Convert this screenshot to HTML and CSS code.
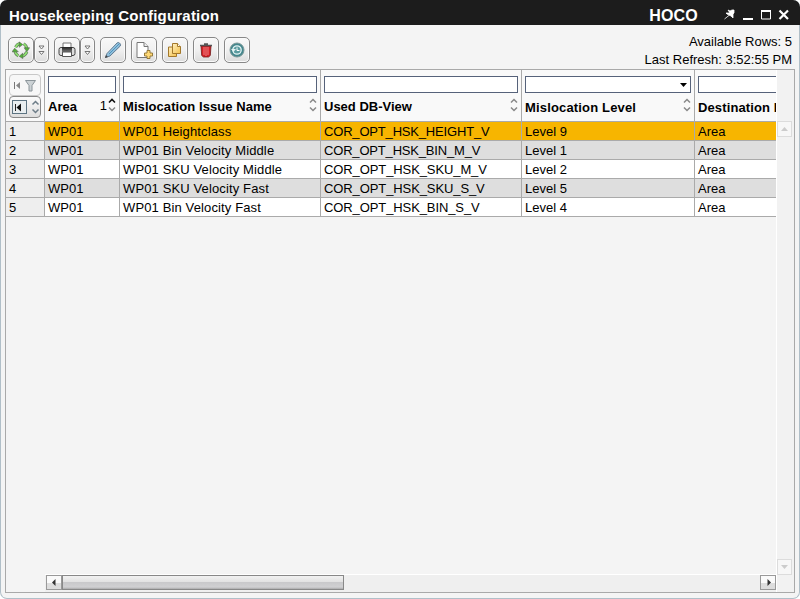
FILE: index.html
```html
<!DOCTYPE html>
<html lang="en">
<head>
<meta charset="utf-8">
<title>Housekeeping Configuration</title>
<link rel="stylesheet" href="styles.css">
</head>
<body>
<svg class="defs" width="0" height="0">
  <defs>
    <linearGradient id="blue" x1="0" y1="0" x2="1" y2="1"><stop offset="0" stop-color="#b5dcf0"/><stop offset="1" stop-color="#6ea4c8"/></linearGradient>
    <linearGradient id="gold" x1="0" y1="0" x2="1" y2="1"><stop offset="0" stop-color="#fff0c0"/><stop offset="1" stop-color="#f3c04c"/></linearGradient>
    <linearGradient id="ink" x1="0" y1="0" x2="0" y2="1"><stop offset="0" stop-color="#222"/><stop offset="1" stop-color="#777"/></linearGradient>
    <symbol id="sort" viewBox="0 0 8 14"><path d="M1 4.500L4 1.500L7 4.500M1 9.500L4 12.500L7 9.500" fill="none" stroke="currentColor" stroke-width="1.500"/></symbol>
    <symbol id="more" viewBox="0 0 7 11"><path d="M1 1h5L3.500 4zM1 6.500h5L3.500 9.500z" fill="#fff" stroke="#666" stroke-width=".9"/></symbol>
  </defs>
</svg>
<div class="window">
  <header class="titlebar">
    <h1 class="title">Housekeeping Configuration</h1>
    <span class="code">HOCO</span>
    <svg class="controls" width="68" height="14" viewBox="0 0 68 14">
      <path d="M5 2l2 1 2-1h2v3l-1 1v4l-2-2-2-1-2-1-1-1h4zM6.500 7L1.500 11" fill="#fff" stroke="#fff" stroke-width=".8"/>
      <path d="M20 11h10" stroke="#fff" stroke-width="2"/>
      <path d="M38.500 3v8h9V3z" fill="none" stroke="#fff"/><path d="M38 3h10" stroke="#fff" stroke-width="2"/>
      <path d="M56.500 2.500l8.500 8.500M65 2.500L56.500 11" stroke="#fff" stroke-width="2.200"/>
    </svg>
  </header>
  <div class="toolbar">
    <div class="buttons">
      <button class="btn first"><svg width="18" height="18" viewBox="0 0 20 20"><g fill="none" stroke="#5c7a58" stroke-width="3.400"><path d="M4 7Q6 3 9 3M13 3Q16 5 16.500 8M16.500 12Q15 16 11 17M7 16.500Q4 15 3 11"/></g><g fill="none" stroke="#8fe070" stroke-width="2"><path d="M4 7Q6 3 9 3M13 3Q16 5 16.500 8M16.500 12Q15 16 11 17M7 16.500Q4 15 3 11"/></g><path d="M8 1l4 3-4 3zM13.500 7.500h6L16.500 12zM12 13.500v6L8 17zM0 12l3-4 4 4z" fill="#4fb535" stroke="#555" stroke-width=".6"/></svg></button>
      <button class="btn drop"><svg width="7" height="11"><use href="#more"/></svg></button>
      <button class="btn print"><svg width="18" height="16" viewBox="0 0 18 16"><path d="M5 6V1h8v5" fill="#fff" stroke="#777"/><rect x="1" y="5.500" width="16" height="8" rx="2" fill="#ddd" stroke="#444"/><path d="M4 5h10v5H4z" fill="url(#ink)"/><path d="M4.500 10h9v4.500h-9z" fill="#fff" stroke="#555"/></svg></button>
      <button class="btn drop"><svg width="7" height="11"><use href="#more"/></svg></button>
      <button class="btn"><svg width="18" height="18" viewBox="0 0 18 18"><path d="M1.500 16.500l1.500-4L13 2q1-1 2.500 0t.8 3L6 15z" fill="url(#blue)" stroke="#56728a" stroke-width=".9"/><path d="M5 13L15 3" stroke="#4d93bd"/><path d="M1 17l1-3 2 2z" fill="#444"/></svg></button>
      <button class="btn"><svg width="18" height="18" viewBox="0 0 18 18"><path d="M2 1.500h7l4 4v11H2z" fill="#fff" stroke="#777"/><path d="M9 1.500v4h4" fill="#eee" stroke="#777"/><path d="M12 9.500h3v2.500h2.500v3H15v2.500h-3V15H9.500v-3H12z" fill="#ffd976" stroke="#8d712f" stroke-width=".9"/></svg></button>
      <button class="btn"><svg width="16" height="16" viewBox="0 0 16 16"><path d="M1.500 5h8v9.500h-8z" fill="url(#gold)" stroke="#a3782b"/><path d="M5.500 1.500h5l3 3v7h-8z" fill="url(#gold)" stroke="#a3782b"/><path d="M10.500 1.500v3h3" fill="#fff" stroke="#a3782b"/></svg></button>
      <button class="btn"><svg width="14" height="16" viewBox="0 0 14 16"><path d="M2 4h10l-.7 9.500L9.500 15h-5l-1.800-1.500z" fill="#d51f25" stroke="#701a1a" stroke-width=".8"/><path d="M5 5v8M7 5v9M9 5v8" stroke="#f6a0a0" stroke-width=".8"/><path d="M1 3.500h12M5 2h4" stroke="#555" stroke-width="1.500"/></svg></button>
      <button class="btn"><svg width="16" height="16" viewBox="0 0 16 16"><circle cx="8" cy="8" r="7" fill="#43868c" stroke="#7c9999"/><circle cx="8" cy="8" r="4.200" fill="#5b9ca0" stroke="#e4f4f4" stroke-width="1.300"/><path d="M8 5.500V8.500h2.500" fill="none" stroke="#fff"/><path d="M2 7h5L4.500 10z" fill="#e4f4f4"/></svg></button>
    </div>
    <div class="status"><div class="rows-info">Available Rows: 5</div><div class="refresh-info">Last Refresh: 3:52:55 PM</div></div>
  </div>
  <main class="frame">
    <div class="content">
      <div class="grid">
        <div class="corner">
          <div class="cbtn pale"><svg width="30" height="18" viewBox="0 0 30 18"><path d="M4.500 6v7" stroke="#777"/><path d="M10 6v7L6 9.500z" fill="#888"/><path d="M15.500 4.500h10l-3.500 5v5.500h-3v-5.500z" fill="#ccd2d5" stroke="#8b9499"/></svg></div>
          <div class="cbtn"><svg width="30" height="18" viewBox="0 0 30 18"><rect x="2.500" y="2.500" width="14" height="13" fill="#e9eef0" stroke="#5d7482"/><path d="M5.500 6v7" stroke="#222"/><path d="M11 5.500v8L6.500 9.500z" fill="#111"/><path d="M22.500 6.500l3-3 3 3M22.500 11.500l3 3 3-3" fill="none" stroke="#6d7d88" stroke-width="1.500"/></svg></div>
        </div>
        <div class="head"><div class="filter"></div><div class="label area">Area</div><span class="order">1</span><svg class="sort two" width="8" height="14" viewBox="0 0 8 14"><path d="M1 4.500l3-3 3 3" fill="none" stroke="#111" stroke-width="1.600"/><path d="M1 9.500l3 3 3-3" fill="none" stroke="#888" stroke-width="1.500"/></svg></div>
        <div class="head"><div class="filter"></div><div class="label issue">Mislocation Issue Name</div><svg class="sort" width="8" height="14"><use href="#sort"/></svg></div>
        <div class="head"><div class="filter"></div><div class="label view">Used DB-View</div><svg class="sort" width="8" height="14"><use href="#sort"/></svg></div>
        <div class="head"><div class="filter select"><svg width="7" height="4"><path d="M0 0h7L3.500 4z"/></svg></div><div class="label low level">Mislocation Level</div><svg class="sort" width="8" height="14"><use href="#sort"/></svg></div>
        <div class="head last"><div class="filter"></div><div class="label low dest">Destination P</div></div>

        <div class="cell num">1</div><div class="cell sel">WP01</div><div class="cell name sel">WP01 Heightclass</div><div class="cell db tight sel">COR_OPT_HSK_HEIGHT_V</div><div class="cell sel">Level 9</div><div class="cell sel last">Area</div>
        <div class="cell num">2</div><div class="cell alt">WP01</div><div class="cell name alt">WP01 Bin Velocity Middle</div><div class="cell db tight alt">COR_OPT_HSK_BIN_M_V</div><div class="cell alt">Level 1</div><div class="cell alt last">Area</div>
        <div class="cell num">3</div><div class="cell">WP01</div><div class="cell name">WP01 SKU Velocity Middle</div><div class="cell db">COR_OPT_HSK_SKU_M_V</div><div class="cell">Level 2</div><div class="cell last">Area</div>
        <div class="cell num">4</div><div class="cell alt">WP01</div><div class="cell name alt">WP01 SKU Velocity Fast</div><div class="cell db alt">COR_OPT_HSK_SKU_S_V</div><div class="cell alt">Level 5</div><div class="cell alt last">Area</div>
        <div class="cell num">5</div><div class="cell">WP01</div><div class="cell name">WP01 Bin Velocity Fast</div><div class="cell db">COR_OPT_HSK_BIN_S_V</div><div class="cell">Level 4</div><div class="cell last">Area</div>
      </div>
      <div class="hscroll">
        <div class="arrow"><svg width="14" height="13"><path d="M8.500 3v7L5 6.500z" fill="#333"/></svg></div>
        <div class="thumb"></div>
        <div class="arrow right"><svg width="14" height="13"><path d="M6.500 3v7L10 6.500z" fill="#333"/></svg></div>
      </div>
    </div>
    <div class="vscroll">
      <div class="varrow"><svg width="7" height="4"><path d="M0 4h7L3.500 0z" fill="#ccc"/></svg></div>
      <div class="varrow"><svg width="7" height="4"><path d="M0 0h7L3.500 4z" fill="#ccc"/></svg></div>
    </div>
  </main>
</div>
</body>
</html>
```

FILE: styles.css
```css
* { box-sizing: border-box; }
body {
  margin: 0;
  background: #fff;
  font: 13px/18px "Liberation Sans", Arial, sans-serif;
  color: #000;
  overflow: hidden;
}
.defs { position: absolute; }
svg { display: block; flex: none; }
.window {
  height: 599px;
  display: flex;
  flex-direction: column;
  background: #f4f4f4;
  border: 1px solid #b0bfc8;
  border-top: 0;
  border-radius: 7px;
}
.titlebar {
  height: 25px;
  flex: none;
  margin: 0 -1px;
  padding: 6px 9px 0 9px;
  display: flex;
  align-items: flex-start;
  background: #1c1c1c;
  border-radius: 7px 7px 0 0;
  color: #fff;
}
.title, .code { margin: 0; font-size: 15px; line-height: 19px; font-weight: bold; white-space: nowrap; }
.title { flex: 1; letter-spacing: .2px; }
.code { margin-right: 25px; font-size: 16px; letter-spacing: .2px; }
.controls { margin-top: 2px; }
.toolbar {
  height: 44px;
  flex: none;
  display: flex;
  justify-content: space-between;
  padding: 8px 7px 0;
}
.buttons { display: flex; margin-top: 4px; }
.btn {
  width: 26px;
  height: 26px;
  margin: 0 5px 0 0;
  padding: 0;
  display: flex;
  align-items: center;
  justify-content: center;
  border: 1px solid #888;
  border-radius: 5px;
  background: linear-gradient(#f8f8f8, #f0f0f0 50%, #dcdcdc);
  box-shadow: inset 0 0 0 1px #fafafa;
}
.btn.first, .btn.print { margin-right: 0; }
.btn.drop { width: 15px; }
.status { text-align: right; white-space: nowrap; }
.frame {
  height: 524px;
  flex: none;
  margin: 0 4px;
  display: flex;
  border: 1px solid #a9a9a9;
}
.content {
  flex: 1;
  min-width: 0;
  display: flex;
  flex-direction: column;
  justify-content: space-between;
}
.grid {
  display: grid;
  grid-template-columns: 39px 75px 201px 201px 173px 81px;
  grid-template-rows: 52px repeat(5, 19px);
}
.corner, .head {
  border-right: 1px solid #aaa;
  border-bottom: 1px solid #aaa;
  background: #f9f9f9;
}
.corner { padding: 4px 3px; }
.cbtn {
  width: 32px;
  height: 22px;
  display: flex;
  align-items: center;
  border: 1px solid #888;
  border-radius: 4px;
  background: linear-gradient(#fbfbfb, #dedede);
}
.cbtn.pale { border-color: #c8c8c8; background: #f7f7f7; }
.head { position: relative; padding: 6px 3px 0 3px; overflow: hidden; }
.head.last, .cell.last { border-right: 0; }
.head.last { padding-right: 0; }
.filter { height: 17px; background: #fff; border: 1px solid #56627a; }
.head.last .filter { border-right: 0; }
.select { display: flex; align-items: center; justify-content: flex-end; padding-right: 3px; }
.label { margin-top: 5px; font-weight: bold; white-space: nowrap; }
.label.low { margin-top: 6px; }
.issue { letter-spacing: .07px; }
.level { letter-spacing: .16px; }
.dest { letter-spacing: .12px; }
.sort { position: absolute; right: 3px; top: 28px; color: #888; }
.order { position: absolute; right: 12px; top: 27px; }
.cell {
  padding-left: 3px;
  border-right: 1px solid #aaa;
  border-bottom: 1px solid #aaa;
  background: #fff;
  line-height: 19px;
  white-space: nowrap;
  overflow: hidden;
}
.name { letter-spacing: .13px; }
.db { letter-spacing: -.1px; }
.tight { letter-spacing: -.18px; }
.num { background: #eee; }
.alt { background: #dedede; }
.sel { background: #f7b500; }
.hscroll {
  height: 18px;
  margin-left: 39px;
  padding: 0 0 2px 1px;
  display: flex;
  background: #efefef;
  border-top: 1px solid #fff;
}
.arrow {
  width: 16px;
  height: 15px;
  border: 1px solid #999;
  background: linear-gradient(#fafafa 50%, #ddd 50%);
}
.thumb {
  width: 282px;
  height: 15px;
  border: 1px solid #888;
  background: linear-gradient(#f2f2f2, #e2e2e2 45%, #c9c9cb 50%, #d0d0d2 85%, #aaa);
}
.right { margin-left: auto; }
.vscroll {
  width: 18px;
  padding: 51px 2px 17px 0;
  display: flex;
  flex-direction: column;
  justify-content: space-between;
  background: #f2f2f2;
  border-left: 1px solid #fff;
}
.varrow {
  width: 15px;
  height: 16px;
  display: flex;
  align-items: center;
  justify-content: center;
  border: 1px solid #dcdcdc;
  background: #f7f7f7;
}
```
